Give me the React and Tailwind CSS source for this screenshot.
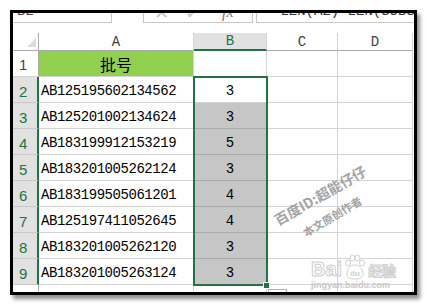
import React from 'react';

const rows = [
  ['AB125195602134562', '3'],
  ['AB125201002134624', '3'],
  ['AB183199912153219', '5'],
  ['AB183201005262124', '3'],
  ['AB183199505061201', '4'],
  ['AB125197411052645', '4'],
  ['AB183201005262120', '3'],
  ['AB183201005263124', '3'],
];

const mono = "font-['Liberation_Mono',monospace]";
const cjk = "font-['Noto_Sans_CJK_SC','Noto_Sans',sans-serif]";

export default function App() {
  return (
    <div className="relative min-h-screen bg-white pl-[10px] pt-[10px]">
      {/* 엑셀 창 */}
      <div className="w-[407px] h-[285px] border-[3px] border-black bg-white overflow-hidden shadow-[3px_4px_4px_rgba(0,0,0,0.45)]">
        {/* 수식 입력줄 (위쪽이 잘림) */}
        <div className="h-[10px] flex items-end overflow-hidden">
          <div className={`w-[99px] h-[22px] shrink-0 border-r border-b border-[#c6c6c6] pl-[4px] flex items-center text-[14px] text-[#444] ${mono}`}>
            B2
          </div>
          <div className="w-[31px] shrink-0 h-[22px] flex items-center justify-center text-[#666] text-[10px]">·</div>
          <div className="w-[110px] shrink-0 h-[22px] border-x border-b border-[#c6c6c6] flex items-center pl-[10px] gap-[16px] text-[#c8c8c8]">
            <span className="text-[18px] leading-none">✕</span>
            <span className="text-[18px] leading-none">✓</span>
            <span className="ml-[6px] text-[16px] italic text-[#777] font-['Liberation_Serif',serif]">fx</span>
          </div>
          <div className={`ml-[3px] flex-1 h-[22px] border-l border-b border-[#c6c6c6] pl-[15px] flex items-center text-[14px] text-[#333] whitespace-nowrap ${mono}`}>
            =LEN(A2)-LEN(SUBSTI
          </div>
        </div>

        <div className="h-[10px]" />

        {/* 시트 */}
        <div className="relative grid grid-cols-[26px_155px_73px_71px_75px]">
          {/* 열 머리글 */}
          <div className="h-[18px] border-b border-r border-[#ababab] flex items-end justify-end pr-[2px] pb-[3px]">
            <div className="w-0 h-0 border-l-[9px] border-l-transparent border-b-[9px] border-b-[#dcdcdc]" />
          </div>
          <div className={`h-[18px] border-b border-r border-b-[#ababab] border-r-[#d4d4d4] flex items-end justify-center text-[14px] leading-[16px] text-[#444] ${mono}`}>A</div>
          <div className={`h-[18px] bg-[#e1e1e1] border-b-2 border-b-[#217346] border-r border-r-[#d4d4d4] flex items-end justify-center text-[14px] leading-[15px] text-[#217346] ${mono}`}>B</div>
          <div className={`h-[18px] border-b border-r border-b-[#ababab] border-r-[#d4d4d4] flex items-end justify-center text-[14px] leading-[16px] text-[#444] ${mono}`}>C</div>
          <div className={`h-[18px] border-b border-r border-b-[#ababab] border-r-[#d4d4d4] flex items-end justify-center text-[14px] leading-[16px] text-[#444] ${mono}`}>D</div>

          {/* 1행 */}
          <div className="h-[26px] border-b border-r border-b-[#d4d4d4] border-r-[#ababab] pl-[6px] flex items-end pb-[2px] text-[15px] leading-[18px] text-[#444] font-['Liberation_Sans',sans-serif]">1</div>
          <div className={`h-[26px] bg-[#92d050] border-b border-r border-[#d4d4d4] flex items-center justify-center text-[16px] text-black ${cjk}`}>批号</div>
          <div className="h-[26px] border-b border-r border-[#d4d4d4]" />
          <div className="h-[26px] border-b border-r border-[#d4d4d4]" />
          <div className="h-[26px] border-b border-r border-[#d4d4d4]" />

          {rows.map(([code, n], i) => (
            <React.Fragment key={i}>
              <div className="h-[26px] bg-[#e1e1e1] border-b border-b-[#c8c8c8] border-r-2 border-r-[#217346] pl-[6px] flex items-end pb-[1px] text-[15px] leading-[18px] text-[#217346] font-['Liberation_Sans',sans-serif]">
                {i + 2}
              </div>
              <div className={`h-[26px] border-b border-r border-[#d4d4d4] pl-[2px] flex items-center pt-[3px] text-[14px] tracking-[-0.45px] text-black ${mono}`}>
                {code}
              </div>
              <div className={`h-[26px] border-b border-r flex items-center justify-center pt-[3px] text-[14px] text-black ${mono} ${i === 0 ? 'bg-white border-[#d4d4d4]' : 'bg-[#c6c6c6] border-[#a9a9a9]'}`}>
                {n}
              </div>
              <div className="h-[26px] border-b border-r border-[#d4d4d4]" />
              <div className="h-[26px] border-b border-r border-[#d4d4d4]" />
            </React.Fragment>
          ))}

          {/* 잘린 마지막 행 */}
          <div className="h-[8px] border-r border-[#ababab] bg-white" />
          <div className="h-[8px] border-r border-[#d4d4d4]" />
          <div className="h-[8px] border-r border-[#d4d4d4]" />
          <div className="h-[8px] border-r border-[#d4d4d4]" />
          <div className="h-[8px] border-r border-[#d4d4d4]" />

          {/* 선택 영역 테두리 */}
          <div className="absolute left-[180px] top-[43px] w-[75px] h-[210px] border-2 border-[#217346] pointer-events-none" />
          {/* 채우기 핸들 */}
          <div className="absolute left-[250px] top-[249px] w-[7px] h-[7px] bg-[#217346] border border-white" />
          {/* 빠른 분석 아이콘 */}
          <div className="absolute left-[255px] top-[256px] w-[19px] h-[12px] border border-[#b0b0b0] bg-white p-[2px]">
            <div className="w-[5px] h-[5px] bg-[#0000ee]" />
          </div>
        </div>
      </div>

      {/* 워터마크 */}
      <div className={`absolute left-[320px] top-[195px] -translate-x-1/2 -translate-y-1/2 rotate-[-30deg] whitespace-nowrap text-[14px] leading-[16px] font-bold text-[#a3a3a3] ${cjk}`}>
        百度ID:超能仔仔
      </div>
      <div className={`absolute left-[332px] top-[216px] -translate-x-1/2 -translate-y-1/2 rotate-[-31deg] whitespace-nowrap text-[11px] leading-[12px] font-bold text-[#a3a3a3] ${cjk}`}>
        本文原创作者
      </div>

      {/* 바이두 로고 */}
      <div className="absolute left-[311px] top-[254px] flex flex-col items-start">
        <div className="flex items-end gap-[2px]">
          <span className="text-[20px] leading-[22px] font-bold text-white font-['Liberation_Sans',sans-serif] [-webkit-text-stroke:1px_#cfcfcf]">Bai</span>
          <svg width="22" height="26" viewBox="0 0 22 26">
            <g fill="white" stroke="#cfcfcf" strokeWidth="1">
              <ellipse cx="4" cy="9" rx="2.5" ry="3" />
              <ellipse cx="8.5" cy="4" rx="2.5" ry="3" />
              <ellipse cx="13.5" cy="4" rx="2.5" ry="3" />
              <ellipse cx="18" cy="9" rx="2.5" ry="3" />
              <path d="M3 20 C3 14 7 11 11 11 C15 11 19 14 19 20 C19 24 15 25 11 25 C7 25 3 24 3 20 Z" />
            </g>
            <text x="11" y="22" textAnchor="middle" fontSize="8" fontWeight="bold" fill="#cfcfcf" fontFamily="Liberation Sans">du</text>
          </svg>
          <span className={`text-[14px] leading-[20px] font-bold text-white [-webkit-text-stroke:1px_#cfcfcf] ${cjk}`}>经验</span>
        </div>
        <span className="text-[9px] leading-[10px] font-bold text-[#c8c8c8] font-['Liberation_Sans',sans-serif]">jingyan.baidu.com</span>
      </div>
    </div>
  );
}
